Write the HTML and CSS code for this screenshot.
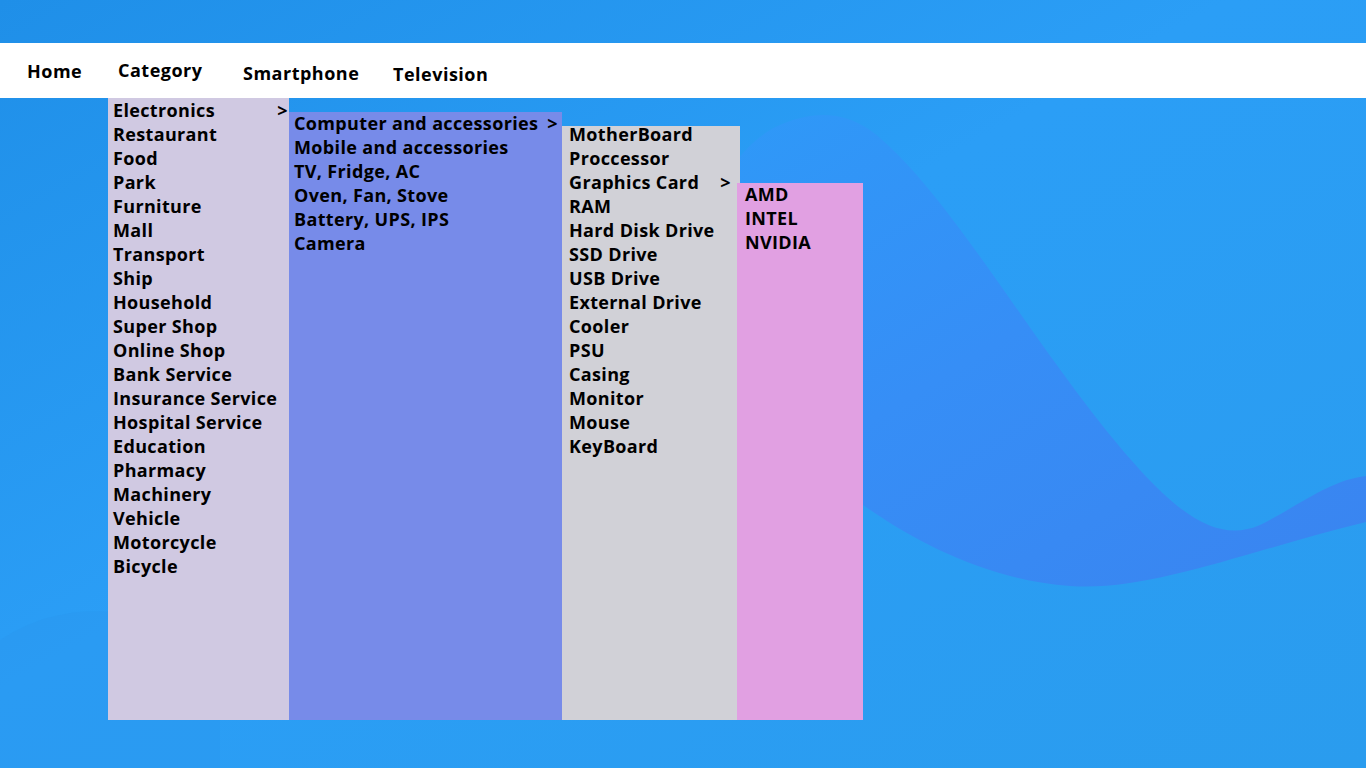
FILE: index.html
```html
<!DOCTYPE html>
<html>
<head>
<meta charset="utf-8">
<link rel="stylesheet" href="styles.css">
</head>
<body>
<svg class="bg" viewBox="0 0 1366 768" preserveAspectRatio="none" aria-hidden="true">
  <defs>
    <linearGradient id="base" x1="0" y1="0" x2="1" y2="1">
      <stop offset="0" stop-color="#1f8fe8"/>
      <stop offset="0.45" stop-color="#2b9ef6"/>
      <stop offset="1" stop-color="#2a9cee"/>
    </linearGradient>
    <linearGradient id="wave" x1="0" y1="0" x2="1" y2="1">
      <stop offset="0" stop-color="#2d9bf8"/>
      <stop offset="0.5" stop-color="#368ef6"/>
      <stop offset="1" stop-color="#3a84f0"/>
    </linearGradient>
  </defs>
  <rect width="1366" height="768" fill="url(#base)"/>
  <path d="M600 400 C680 260 720 150 780 125 C810 112 840 110 870 130 C950 190 1040 360 1140 470 C1190 525 1225 540 1260 525 C1300 505 1330 480 1366 476 L1366 522 C1250 550 1150 592 1070 586 C990 580 920 545 863 505 C800 460 700 430 600 400 Z" fill="url(#wave)"/>
  <path d="M0 640 C60 600 140 600 220 650 L220 768 L0 768 Z" fill="#2a97ef" opacity="0.5"/>
</svg>
<nav class="navbar">
  <ul class="nav">
    <li class="nav-item nav-home">Home</li>
    <li class="nav-item nav-category">Category
      <ul class="menu menu-1">
        <li class="row has-sub"><span>Electronics</span><span>&gt;</span>
          <ul class="menu menu-2">
            <li class="row has-sub"><span>Computer and accessories</span><span>&gt;</span>
              <ul class="menu menu-3">
                <li class="row">MotherBoard</li>
                <li class="row">Proccessor</li>
                <li class="row has-sub"><span>Graphics Card</span><span>&gt;</span>
                  <ul class="menu menu-4">
                    <li class="row">AMD</li>
                    <li class="row">INTEL</li>
                    <li class="row">NVIDIA</li>
                  </ul>
                </li>
                <li class="row">RAM</li>
                <li class="row">Hard Disk Drive</li>
                <li class="row">SSD Drive</li>
                <li class="row">USB Drive</li>
                <li class="row">External Drive</li>
                <li class="row">Cooler</li>
                <li class="row">PSU</li>
                <li class="row">Casing</li>
                <li class="row">Monitor</li>
                <li class="row">Mouse</li>
                <li class="row">KeyBoard</li>
              </ul>
            </li>
            <li class="row">Mobile and accessories</li>
            <li class="row">TV, Fridge, AC</li>
            <li class="row">Oven, Fan, Stove</li>
            <li class="row">Battery, UPS, IPS</li>
            <li class="row">Camera</li>
          </ul>
        </li>
        <li class="row">Restaurant</li>
        <li class="row">Food</li>
        <li class="row">Park</li>
        <li class="row">Furniture</li>
        <li class="row">Mall</li>
        <li class="row">Transport</li>
        <li class="row">Ship</li>
        <li class="row">Household</li>
        <li class="row">Super Shop</li>
        <li class="row">Online Shop</li>
        <li class="row">Bank Service</li>
        <li class="row">Insurance Service</li>
        <li class="row">Hospital Service</li>
        <li class="row">Education</li>
        <li class="row">Pharmacy</li>
        <li class="row">Machinery</li>
        <li class="row">Vehicle</li>
        <li class="row">Motorcycle</li>
        <li class="row">Bicycle</li>
      </ul>
    </li>
    <li class="nav-item nav-smart">Smartphone</li>
    <li class="nav-item nav-tv">Television</li>
  </ul>
</nav>
</body>
</html>
```
FILE: styles.css
```css
html, body {
  margin: 0;
  padding: 0;
  width: 1366px;
  height: 768px;
  overflow: hidden;
}
body {
  position: relative;
  font-family: "Open Sans", "Noto Sans", sans-serif;
  color: #000;
}
.bg {
  position: absolute;
  left: 0;
  top: 0;
  width: 1366px;
  height: 768px;
  z-index: 0;
}
.navbar {
  position: relative;
  z-index: 1;
  margin-top: 43px;
  height: 55px;
  background: #ffffff;
}
.nav {
  list-style: none;
  margin: 0;
  padding: 0 0 0 27px;
  display: flex;
  height: 55px;
}
.nav-item {
  font-size: 18px;
  font-weight: 700;
  line-height: 24px;
  letter-spacing: 0.5px;
}
.nav-home { padding-top: 16px; width: 91px; }
.nav-category { padding-top: 15px; width: 125px; position: relative; }
.nav-smart { padding-top: 18px; width: 150px; }
.nav-tv { padding-top: 19px; }

.menu {
  list-style: none;
  margin: 0;
  position: absolute;
  box-sizing: border-box;
  font-size: 18px;
  font-weight: 700;
  line-height: 24px;
  letter-spacing: 0.35px;
}
.row {
  position: relative;
  display: flex;
  justify-content: space-between;
  height: 24px;
  white-space: nowrap;
}
.menu-1 {
  left: -10px;
  top: 55px;
  width: 181px;
  height: 622px;
  padding: 0 1px 0 5px;
  background: #d0c9e2;
}
.menu-2 {
  left: 176px;
  top: 13px;
  width: 273px;
  height: 609px;
  padding: 0 4px 0 5px;
  background: linear-gradient(transparent 1px, #778be9 1px);
}
.menu-3 {
  left: 268px;
  top: 11px;
  width: 178px;
  height: 598px;
  padding: 0 9px 0 7px;
  background: linear-gradient(transparent 4px, #d1d1d7 4px);
}
.menu-4 {
  left: 168px;
  top: 12px;
  width: 126px;
  height: 538px;
  padding: 0 4px 0 8px;
  background: linear-gradient(transparent 1px, #e1a0e2 1px);
}
```
